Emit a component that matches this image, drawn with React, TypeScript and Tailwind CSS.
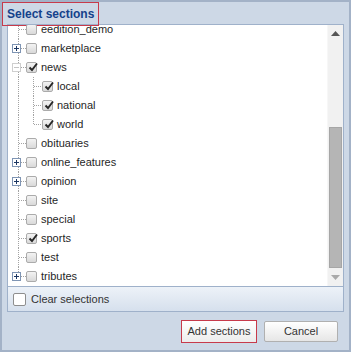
import React from "react"

type Node = {
 label: string
 checked?: boolean
 expander?: "plus" | "minus"
 child?: boolean
 last?: boolean
}

const nodes: Node[] = [
 { label: "eedition_demo" },
 { label: "marketplace", expander: "plus" },
 { label: "news", expander: "minus", checked: true },
 { label: "local", child: true, checked: true },
 { label: "national", child: true, checked: true },
 { label: "world", child: true, checked: true, last: true },
 { label: "obituaries" },
 { label: "online_features", expander: "plus" },
 { label: "opinion", expander: "plus" },
 { label: "site" },
 { label: "special" },
 { label: "sports", checked: true },
 { label: "test" },
 { label: "tributes", expander: "plus", last: true },
]

const dot = { stroke: "#a3a3a3", strokeWidth: 1, strokeDasharray: "1 1" }

function Expander({ kind }: { kind: "plus" | "minus" }) {
 const faded = kind === "minus"
 return (
  <g>
   <rect x={4.5} y={5.5} width={8} height={8} fill="#fff" stroke={faded ? "#cfcfcf" : "#7f95b4"} />
   <line x1={6} y1={9.5} x2={11} y2={9.5} stroke={faded ? "#c4c4c4" : "#1d3763"} />
   {kind === "plus" && <line x1={8.5} y1={7} x2={8.5} y2={12} stroke="#1d3763" />}
  </g>
 )
}

function Gutter({ node }: { node: Node }) {
 if (node.child) {
  return (
   <svg width={34} height={19} className="shrink-0">
    <line x1={10.5} y1={0} x2={10.5} y2={19} {...dot} />
    <line x1={25.5} y1={0} x2={25.5} y2={node.last ? 9.5 : 19} {...dot} />
    <line x1={26} y1={9.5} x2={34} y2={9.5} {...dot} />
   </svg>
  )
 }
 return (
  <svg width={18} height={19} className="shrink-0">
   <line x1={10.5} y1={0} x2={10.5} y2={node.last ? 9.5 : 19} {...dot} />
   <line x1={11} y1={9.5} x2={18} y2={9.5} {...dot} />
   {node.expander && <Expander kind={node.expander} />}
  </svg>
 )
}

function Check({ checked }: { checked?: boolean }) {
 return (
  <span className="relative w-[11px] h-[11px] shrink-0 rounded-[2px] border border-[#ababab] bg-linear-to-b from-[#f3f3f3] to-[#d9d9d9]">
   {checked && (
    <svg width={12} height={12} className="absolute -top-[2px] left-0">
     <path d="M2.5 6.5 L5 9 L10 2.5" fill="none" stroke="#262626" strokeWidth={1.9} />
    </svg>
   )}
  </span>
 )
}

export default function App() {
 return (
  <div className="relative w-[351px] h-[352px] border-2 border-[#a3b2c7] bg-[#cdd8e6] font-['Liberation_Sans',Arial,sans-serif] flex flex-col">

   <div className="h-[22px] shrink-0 flex items-center pl-[5px] pt-[2px]">
    <span className="text-[12px] font-bold text-[#15428b] leading-none">Select sections</span>
   </div>
   <div className="absolute top-0 left-0 w-[97px] h-[24px] border border-[#c73a4b]" />

   <div className="mx-[5px] flex flex-col border border-[#9fb1ca]">

    <div className="h-[261px] flex bg-white">
     <div className="flex-1 overflow-hidden">
      <div className="-mt-[5px]">
       {nodes.map(n => (
        <div key={n.label} className="h-[19px] flex items-center">
         <Gutter node={n} />
         <Check checked={n.checked} />
         <span className="ml-[4px] text-[11px] leading-[19px] text-[#1f1f1f]">{n.label}</span>
        </div>
       ))}
      </div>
     </div>

     <div className="w-[16px] flex flex-col bg-[#f1f1f1] border-l border-[#f7f7f7]">
      <div className="h-[17px] flex items-center justify-center">
       <svg width={9} height={5}><path d="M0 5 L4.5 0 L9 5 Z" fill="#555" /></svg>
      </div>
      <div className="h-[85px]" />
      <div className="h-[141px] ml-[1px] mr-[1px] bg-[#b5b5b5] border border-[#a6a6a6]" />
      <div className="flex-1 flex items-center justify-center">
       <svg width={9} height={5}><path d="M0 0 L9 0 L4.5 5 Z" fill="#a9a9a9" /></svg>
      </div>
     </div>
    </div>

    <div className="h-[25px] border-t border-[#9fb1ca] bg-linear-to-b from-[#edf2f8] to-[#d6e0ed] flex items-center pl-[5px]">
     <span className="w-[13px] h-[13px] rounded-[2px] border border-[#8e8e8e] bg-white" />
     <span className="ml-[5px] text-[11px] text-[#333]">Clear selections</span>
    </div>

   </div>

   <div className="flex justify-end items-start gap-[7px] pr-[11px] pt-[8px]">
    <button className="w-[76px] h-[23px] border border-[#c73a4b] bg-linear-to-b from-[#ffffff] to-[#ececec] text-[11px] text-[#333]">
     Add sections
    </button>
    <button className="mt-px w-[74px] h-[21px] rounded-[2px] border border-[#b0b0b0] bg-linear-to-b from-[#ffffff] to-[#e6e6e6] text-[11px] text-[#333]">
     Cancel
    </button>
   </div>

  </div>
 )
}
